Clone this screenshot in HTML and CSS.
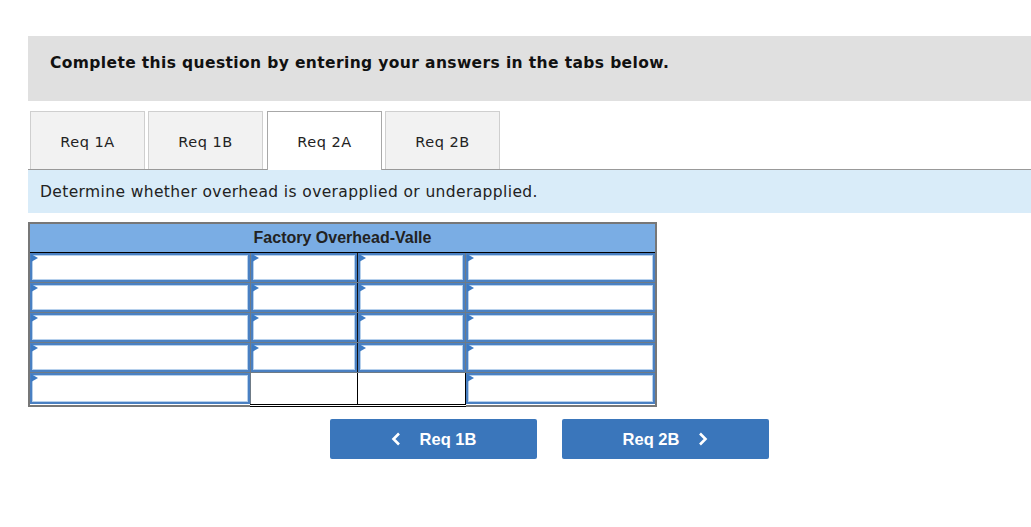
FILE: index.html
```html
<!DOCTYPE html>
<html>
<head>
<meta charset="utf-8">
<link rel="stylesheet" href="styles.css">
</head>
<body>
<div class="page">
  <div class="banner">Complete this question by entering your answers in the tabs below.</div>
  <div class="tabs">
    <div class="tab">Req 1A</div>
    <div class="tab">Req 1B</div>
    <div class="tab active">Req 2A</div>
    <div class="tab">Req 2B</div>
  </div>
  <div class="instr">Determine whether overhead is overapplied or underapplied.</div>
  <table class="taccount">
    <colgroup>
      <col class="c1"><col class="c2"><col class="c3"><col class="c4">
    </colgroup>
    <thead>
      <tr><th colspan="4">Factory Overhead-Valle</th></tr>
    </thead>
    <tbody>
      <tr><td><div class="inp"><span class="tri"></span></div></td><td><div class="inp"><span class="tri"></span></div></td><td><div class="inp"><span class="tri"></span></div></td><td><div class="inp"><span class="tri"></span></div></td></tr>
      <tr><td><div class="inp"><span class="tri"></span></div></td><td><div class="inp"><span class="tri"></span></div></td><td><div class="inp"><span class="tri"></span></div></td><td><div class="inp"><span class="tri"></span></div></td></tr>
      <tr><td><div class="inp"><span class="tri"></span></div></td><td><div class="inp"><span class="tri"></span></div></td><td><div class="inp"><span class="tri"></span></div></td><td><div class="inp"><span class="tri"></span></div></td></tr>
      <tr><td><div class="inp"><span class="tri"></span></div></td><td><div class="inp"><span class="tri"></span></div></td><td><div class="inp"><span class="tri"></span></div></td><td><div class="inp"><span class="tri"></span></div></td></tr>
      <tr class="total"><td><div class="inp tall"><span class="tri"></span></div></td><td class="blank"></td><td class="blank"></td><td><div class="inp tall"><span class="tri"></span></div></td></tr>
    </tbody>
  </table>
  <div class="nav">
    <button class="btn"><svg class="chev" width="10" height="14" viewBox="0 0 10 14"><polyline points="8,1.5 2.5,7 8,12.5" fill="none" stroke="#fff" stroke-width="2.6"/></svg><span>Req 1B</span></button>
    <button class="btn"><span>Req 2B</span><svg class="chev" width="10" height="14" viewBox="0 0 10 14"><polyline points="2,1.5 7.5,7 2,12.5" fill="none" stroke="#fff" stroke-width="2.6"/></svg></button>
  </div>
</div>
</body>
</html>
```
FILE: styles.css
```css
html, body {
  margin: 0;
  padding: 0;
  background: #ffffff;
}
.page {
  padding: 36px 0 0 28px;
  font-family: "DejaVu Sans", Verdana, sans-serif;
  color: #111;
}
.banner {
  height: 65px;
  box-sizing: border-box;
  background: #e0e0e0;
  padding: 18px 0 0 22px;
  font-weight: bold;
  font-size: 15.5px;
  letter-spacing: 0.38px;
  color: #111;
}
.tabs {
  display: flex;
  gap: 3px;
  margin-top: 10px;
  padding-left: 2px;
  border-bottom: 1px solid #999;
  height: 58px;
}
.tab {
  width: 115px;
  height: 58px;
  box-sizing: border-box;
  background: #f2f2f2;
  border: 1px solid #cfcfcf;
  border-bottom: none;
  display: flex;
  align-items: center;
  justify-content: center;
  font-size: 14.5px;
  letter-spacing: 0.5px;
  color: #222;
  padding-top: 2px;
}
.tab.active {
  background: #fff;
  border-color: #a8a8a8;
  height: 59px;
  margin-left: 1px;
}
.instr {
  height: 43px;
  box-sizing: border-box;
  background: #d9ecf9;
  padding: 13px 0 0 12px;
  font-size: 15.5px;
  letter-spacing: 0.38px;
  color: #222;
}
.taccount {
  margin-top: 9px;
  width: 627px;
  border-collapse: collapse;
  table-layout: fixed;
  border: 2px solid #777;
}
.c1 { width: 221px; }
.c2 { width: 107px; }
.c3 { width: 108px; }
.c4 { width: 191px; }
.taccount th {
  background: #7aade4;
  height: 27px;
  padding: 0;
  font-family: "Liberation Sans", Arial, sans-serif;
  font-weight: bold;
  font-size: 16px;
  color: #222;
  border-bottom: 1px solid #000;
  text-align: center;
  vertical-align: middle;
  padding-bottom: 1px;
}
.taccount td {
  border: 1px solid #6f7b86;
  padding: 0;
  height: 29px;
}
.taccount td:nth-child(2) { border-right: 1px solid #111; }
.taccount tr.total td {
  border-top: 1px solid #000;
  height: 31px;
}
.taccount td.blank {
  border-left: 1px solid #000;
  border-right: 1px solid #000;
  border-bottom: 3px double #000;
  background: #fff;
}
.inp {
  position: relative;
  height: 29px;
  box-sizing: border-box;
  border: 1px solid #4a80c2;
  box-shadow: inset 0 0 0 1px #4a80c2, inset 0 0 0 2px #b6d0ec;
  background: #fff;
}
.inp.tall { height: 31px; }
.tri {
  position: absolute;
  left: 0;
  top: 0;
  width: 0;
  height: 0;
  border-left: 7px solid #3c7ac4;
  border-top: 4px solid transparent;
  border-bottom: 4px solid transparent;
}
.nav {
  display: flex;
  gap: 25px;
  margin-top: 12px;
  padding-left: 302px;
}
.btn {
  width: 207px;
  height: 40px;
  background: #3a76bb;
  border: none;
  border-radius: 2px;
  color: #fff;
  font-family: "Liberation Sans", Arial, sans-serif;
  font-weight: bold;
  font-size: 16.5px;
  display: flex;
  align-items: center;
  justify-content: center;
  gap: 19px;
  padding: 0;
}
.chev {
  display: block;
}
```
